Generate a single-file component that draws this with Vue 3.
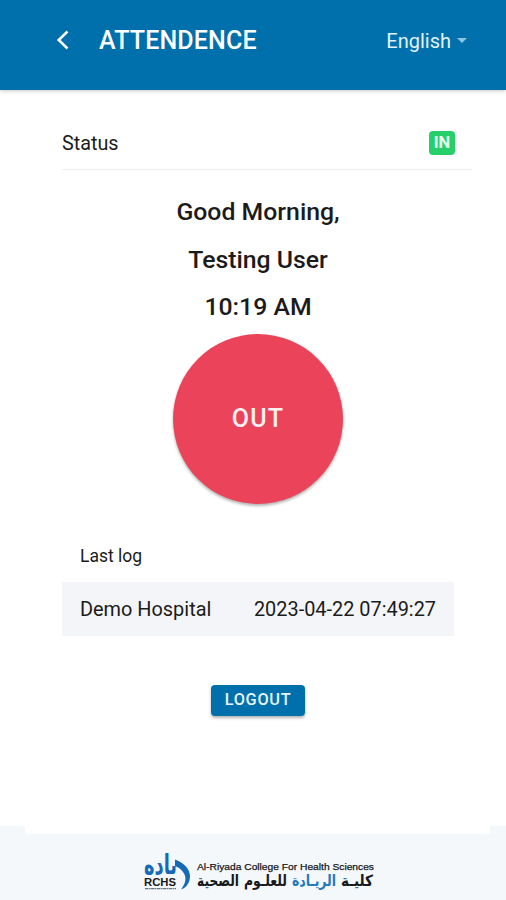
<script setup>
    import { reactive, ref } from 'vue';

    let language = ref('English')
    let user = reactive({
        "greeting":'Good Morning,',
        "name":'Testing User',
        "time":'10:19 AM',
    })
    let inside = ref(true)
    let logs = reactive([
        { "place":'Demo Hospital', "time":'2023-04-22 07:49:27' },
    ])

    function toggle(){
        inside.value = !inside.value
    }
</script>

<template>
    <div class="page">
        <header class="toolbar">
            <svg class="back" width="14" height="20" viewBox="0 0 14 20">
                <path d="M12.5 1.5 L3.7 10 L12.5 18.5" fill="none" stroke="#fff" stroke-width="2.5" />
            </svg>
            <h1 class="title">ATTENDENCE</h1>
            <div class="language">
                <span>{{ language }}</span>
                <svg width="10" height="5" viewBox="0 0 10 5"><path d="M0 0h10L5 5z" fill="#8fc6df" /></svg>
            </div>
        </header>
        <main class="content">
            <div class="status">
                <span class="status-label">Status</span>
                <span class="badge">{{ inside ? 'IN' : 'OUT' }}</span>
            </div>
            <div class="greeting">
                <p class="hello">{{ user.greeting }}</p>
                <p class="name">{{ user.name }}</p>
                <p class="time">{{ user.time }}</p>
            </div>
            <button class="punch" @click="toggle">{{ inside ? 'OUT' : 'IN' }}</button>
            <div class="last-log">Last log</div>
            <div class="log" v-for="(log,index) in logs" :key="index">
                <span class="place">{{ log.place }}</span>
                <span class="stamp">{{ log.time }}</span>
            </div>
            <button class="logout">LOGOUT</button>
        </main>
        <footer class="footer">
            <div class="sheet"></div>
            <svg class="brand" width="236" height="56" viewBox="0 -14 236 56">
                <g transform="translate(4 22) scale(1 1.25)" font-family="'DejaVu Sans', sans-serif" font-weight="bold">
                    <text x="0" y="0" textLength="33" lengthAdjust="spacingAndGlyphs" font-size="22" fill="#1769b5">ىاده</text>
                </g>
                <path d="M35 7.5 C43 10 50 17 50 24 C50 31 46 36 41 37.5 C46 31 47 25 43 20 C41 17 38 15 35 14 Z" fill="#1769b5" />
                <g font-family="'Liberation Sans', Arial, sans-serif" fill="#17191c">
                    <text x="4" y="34" font-size="11" font-weight="bold" textLength="32" lengthAdjust="spacingAndGlyphs">RCHS</text>
                    <text x="57" y="17.5" font-size="9.4" stroke="#17191c" stroke-width=".25" textLength="177" lengthAdjust="spacingAndGlyphs">Al-Riyada College For Health Sciences</text>
                </g>
                <path d="M5 36.7H36" stroke="#657383" stroke-width="1.2" stroke-dasharray="3 .5 2 .5" />
                <g font-family="'DejaVu Sans', sans-serif" font-weight="bold" font-size="15.5" fill="#17191c">
                    <text x="57" y="34" textLength="42" lengthAdjust="spacingAndGlyphs">الصحية</text>
                    <text x="104" y="34" textLength="43" lengthAdjust="spacingAndGlyphs">للعلـوم</text>
                    <text x="152" y="34" textLength="44" lengthAdjust="spacingAndGlyphs" fill="#2479bd">الريـادة</text>
                    <text x="201" y="34" textLength="32" lengthAdjust="spacingAndGlyphs">كليـة</text>
                </g>
            </svg>
        </footer>
    </div>
</template>

<style>
body {
  margin: 0;
}
</style>

<style scoped>
.page {
  display: flex;
  flex-direction: column;
  height: 900px;
  overflow: hidden;
  background: #fff;
  color: #1b1b1b;
  font-family: Roboto, sans-serif;
}

.toolbar {
  display: flex;
  align-items: center;
  box-sizing: border-box;
  height: 90px;
  flex: none;
  padding: 0 39px 9px 55px;
  background: #0070ac;
  box-shadow: 0 1px 4px rgba(0, 0, 0, 0.22);
  color: #fff;
}

.back {
  margin-bottom: 1px;
}

.title {
  margin: 0 0 0 30px;
  font-size: 25px;
  font-weight: 500;
  line-height: 30px;
  letter-spacing: 0.15px;
}

.language {
  display: flex;
  align-items: center;
  gap: 6px;
  margin-left: auto;
  font-size: 20px;
  line-height: 26px;
  color: #e3f2fa;
}

.content {
  display: flex;
  flex-direction: column;
  align-items: center;
  box-sizing: border-box;
  height: 736px;
  padding: 27px 52px 0 62px;
}

.status {
  display: flex;
  align-items: center;
  justify-content: space-between;
  align-self: stretch;
  box-sizing: border-box;
  height: 53px;
  margin-right: -18px;
  padding-right: 17px;
  border-bottom: 1px solid #eeeeee;
}

.status-label {
  font-size: 19.8px;
}

.badge {
  box-sizing: border-box;
  width: 26px;
  height: 24px;
  border-radius: 4px;
  background: #27cf6b;
  color: #e9fff0;
  font-size: 16.5px;
  font-weight: 700;
  line-height: 23px;
  text-align: center;
}

.greeting {
  padding-top: 18px;
  text-align: center;
}

.greeting p {
  margin: 0;
  font-size: 24.8px;
  font-weight: 500;
  line-height: 47.5px;
}

.punch {
  width: 170px;
  height: 170px;
  margin-top: 3.5px;
  padding: 0 0 2px;
  border: none;
  border-radius: 50%;
  background: #eb445a;
  box-shadow: 0 2px 3px rgba(0, 0, 0, 0.3);
  color: #fff0f2;
  font: 500 25px Roboto, sans-serif;
  letter-spacing: 1.2px;
}

.last-log {
  align-self: flex-start;
  margin-top: 40px;
  padding-left: 18px;
  font-size: 17.5px;
  line-height: 24px;
}

.log {
  display: flex;
  align-items: center;
  justify-content: space-between;
  align-self: stretch;
  box-sizing: border-box;
  height: 54px;
  margin-top: 14px;
  padding: 0 18px;
  background: #f4f5f8;
  font-size: 19.9px;
}

.logout {
  width: 94px;
  height: 31px;
  margin-top: 49px;
  padding: 0 0 2px;
  border: none;
  border-radius: 4px;
  background: #0070ac;
  box-shadow: 0 2px 3px rgba(0, 0, 0, 0.3);
  color: #e9f7ff;
  font: 500 16.3px Roboto, sans-serif;
  letter-spacing: 0.7px;
}

.footer {
  flex: none;
  height: 74px;
  background: #f4f8fa;
}

.sheet {
  height: 8px;
  margin: 0 16px 0 25px;
  background: #fff;
}

.brand {
  display: block;
  margin: 4px 0 0 140px;
}
</style>
